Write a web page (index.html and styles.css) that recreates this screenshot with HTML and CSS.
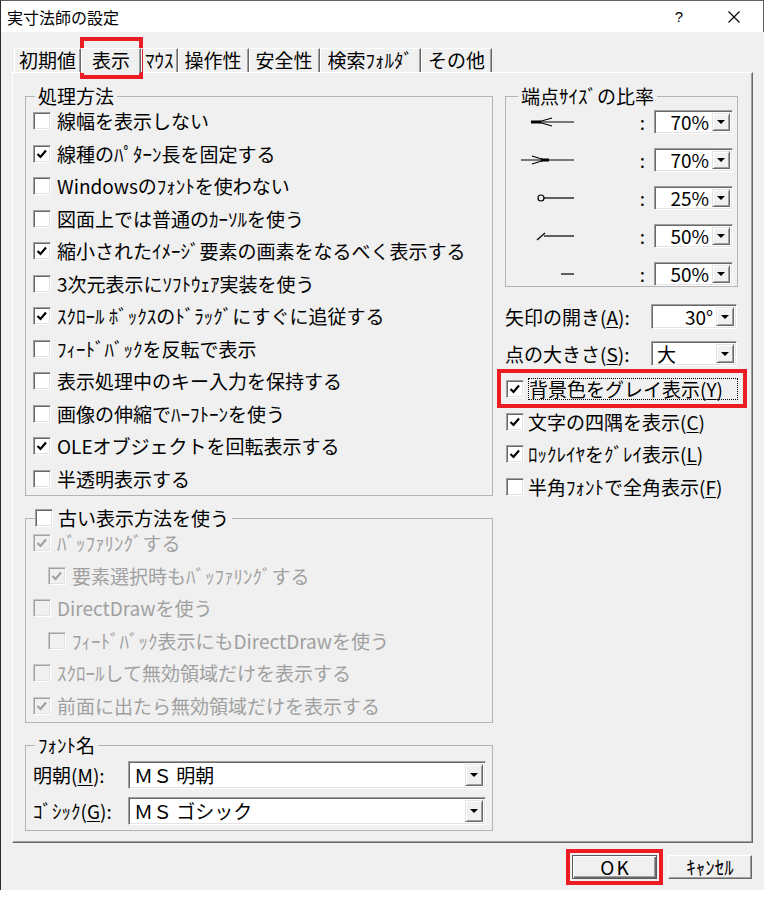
FILE: index.html
```html
<!DOCTYPE html>
<html lang="ja">
<head>
<meta charset="utf-8">
<title>実寸法師の設定</title>
<link rel="stylesheet" href="styles.css">
</head>
<body>
<div class="dialog">
  <div class="titlebar">
    <span class="title">実寸法師の設定</span>
    <span class="help">?</span>
    <svg class="close" viewBox="0 0 12 12"><path d="M0.5 0.5L11.5 11.5M11.5 0.5L0.5 11.5"/></svg>
  </div>
  <div class="body">
    <div class="tabs">
      <div class="tab first">初期値</div>
      <div class="tab active">表示</div>
      <div class="tab narrow">ﾏｳｽ</div>
      <div class="tab">操作性</div>
      <div class="tab">安全性</div>
      <div class="tab wide">検索ﾌｫﾙﾀﾞ</div>
      <div class="tab">その他</div>
    </div>
    <div class="panel">
      <div class="col">
        <fieldset class="group">
          <legend>処理方法</legend>
          <div class="cb"><span class="box"></span>線幅を表示しない</div>
          <div class="cb"><span class="box"><svg class="chk" viewBox="0 0 14 14"><polyline points="2.5,7 5.5,10 11,3.5"/></svg></span>線種のﾊﾟﾀｰﾝ長を固定する</div>
          <div class="cb"><span class="box"></span>Windowsのﾌｫﾝﾄを使わない</div>
          <div class="cb"><span class="box"></span>図面上では普通のｶｰｿﾙを使う</div>
          <div class="cb"><span class="box"><svg class="chk" viewBox="0 0 14 14"><polyline points="2.5,7 5.5,10 11,3.5"/></svg></span>縮小されたｲﾒｰｼﾞ要素の画素をなるべく表示する</div>
          <div class="cb"><span class="box"></span>3次元表示にｿﾌﾄｳｪｱ実装を使う</div>
          <div class="cb"><span class="box"><svg class="chk" viewBox="0 0 14 14"><polyline points="2.5,7 5.5,10 11,3.5"/></svg></span>ｽｸﾛｰﾙ ﾎﾞｯｸｽのﾄﾞﾗｯｸﾞにすぐに追従する</div>
          <div class="cb"><span class="box"></span>ﾌｨｰﾄﾞﾊﾞｯｸを反転で表示</div>
          <div class="cb"><span class="box"></span>表示処理中のキー入力を保持する</div>
          <div class="cb"><span class="box"></span>画像の伸縮でﾊｰﾌﾄｰﾝを使う</div>
          <div class="cb"><span class="box"><svg class="chk" viewBox="0 0 14 14"><polyline points="2.5,7 5.5,10 11,3.5"/></svg></span>OLEオブジェクトを回転表示する</div>
          <div class="cb"><span class="box"></span>半透明表示する</div>
        </fieldset>

        <fieldset class="group g-old">
          <legend class="legend-cb"><span class="box"></span>古い表示方法を使う</legend>
          <div class="cb dis"><span class="box"><svg class="chk" viewBox="0 0 14 14"><polyline points="2.5,7 5.5,10 11,3.5"/></svg></span>ﾊﾞｯﾌｧﾘﾝｸﾞする</div>
          <div class="cb dis ind"><span class="box"><svg class="chk" viewBox="0 0 14 14"><polyline points="2.5,7 5.5,10 11,3.5"/></svg></span>要素選択時もﾊﾞｯﾌｧﾘﾝｸﾞする</div>
          <div class="cb dis"><span class="box"></span>DirectDrawを使う</div>
          <div class="cb dis ind"><span class="box"></span>ﾌｨｰﾄﾞﾊﾞｯｸ表示にもDirectDrawを使う</div>
          <div class="cb dis"><span class="box"></span>ｽｸﾛｰﾙして無効領域だけを表示する</div>
          <div class="cb dis"><span class="box"><svg class="chk" viewBox="0 0 14 14"><polyline points="2.5,7 5.5,10 11,3.5"/></svg></span>前面に出たら無効領域だけを表示する</div>
        </fieldset>

        <fieldset class="group g-font">
          <legend>ﾌｫﾝﾄ名</legend>
          <div class="frows">
            <div class="frow"><span class="lbl">明朝(<u>M</u>):</span><div class="combo"><span class="val">ＭＳ 明朝</span><span class="drop"></span></div></div>
            <div class="frow"><span class="lbl">ｺﾞｼｯｸ(<u>G</u>):</span><div class="combo"><span class="val">ＭＳ ゴシック</span><span class="drop"></span></div></div>
          </div>
        </fieldset>
      </div>

      <div class="col right">
        <fieldset class="group g-ratio">
          <legend>端点ｻｲｽﾞの比率</legend>
          <div class="rrows">
            <div class="rrow">
              <svg class="icon" viewBox="0 0 62 24"><path d="M16 12H59"/><path class="thick" d="M16 12H26"/><path d="M23 12L37 8M23 12L37 16"/></svg>
              <span class="colon">:</span>
              <div class="combo"><span class="val r">70%</span><span class="drop"></span></div>
            </div>
            <div class="rrow">
              <svg class="icon" viewBox="0 0 62 24"><path d="M6 12H59"/><path class="thick" d="M26 12H34"/><path d="M17 8L30 12M17 16L30 12"/></svg>
              <span class="colon">:</span>
              <div class="combo"><span class="val r">70%</span><span class="drop"></span></div>
            </div>
            <div class="rrow">
              <svg class="icon" viewBox="0 0 62 24"><circle cx="26" cy="12" r="3"/><path d="M29 12H59"/></svg>
              <span class="colon">:</span>
              <div class="combo"><span class="val r">25%</span><span class="drop"></span></div>
            </div>
            <div class="rrow">
              <svg class="icon" viewBox="0 0 62 24"><path d="M22 16L30 9"/><path d="M29 12H59"/></svg>
              <span class="colon">:</span>
              <div class="combo"><span class="val r">50%</span><span class="drop"></span></div>
            </div>
            <div class="rrow">
              <svg class="icon" viewBox="0 0 62 24"><path d="M46 12H59"/></svg>
              <span class="colon">:</span>
              <div class="combo"><span class="val r">50%</span><span class="drop"></span></div>
            </div>
          </div>
        </fieldset>

        <div class="field f1"><span class="lbl">矢印の開き(<u>A</u>):</span><div class="combo"><span class="val r">30°</span><span class="drop"></span></div></div>
        <div class="field f2"><span class="lbl">点の大きさ(<u>S</u>):</span><div class="combo"><span class="val">大</span><span class="drop"></span></div></div>

        <div class="rchecks">
          <div class="cb"><span class="box"><svg class="chk" viewBox="0 0 14 14"><polyline points="2.5,7 5.5,10 11,3.5"/></svg></span><span class="focus">背景色をグレイ表示(<u>Y</u>)</span></div>
          <div class="cb"><span class="box"><svg class="chk" viewBox="0 0 14 14"><polyline points="2.5,7 5.5,10 11,3.5"/></svg></span>文字の四隅を表示(<u>C</u>)</div>
          <div class="cb"><span class="box"><svg class="chk" viewBox="0 0 14 14"><polyline points="2.5,7 5.5,10 11,3.5"/></svg></span>ﾛｯｸﾚｲﾔをｸﾞﾚｲ表示(<u>L</u>)</div>
          <div class="cb"><span class="box"></span>半角ﾌｫﾝﾄで全角表示(<u>F</u>)</div>
        </div>
      </div>
    </div>
    <div class="buttons">
      <div class="btn ok">OK</div>
      <div class="btn cancel">ｷｬﾝｾﾙ</div>
    </div>
  </div>
  <div class="mark mark-tab"></div>
  <div class="mark mark-cb"></div>
  <div class="mark mark-ok"></div>
</div>
</body>
</html>
```

FILE: styles.css
```css
* { box-sizing: border-box; }
html, body { margin: 0; padding: 0; background: #fff; }
body {
  font-family: "Noto Sans CJK JP", "Noto Sans", sans-serif;
  font-size: 19px;
  line-height: 20px;
  color: #000;
}
u { text-decoration: underline; text-underline-offset: 2px; text-decoration-thickness: 1px; }

.dialog {
  position: relative;
  width: 764px;
  height: 890px;
  border-left: 1px solid #2b2b2b;
  border-top: 1px solid #5f5f5f;
  background: #f0f0f0;
  display: flex;
  flex-direction: column;
}

.titlebar {
  flex: none;
  height: 31px;
  background: #fff;
  border-right: 1px solid #5f5f5f;
  display: flex;
  align-items: center;
  padding-left: 6px;
}
.title { flex: 1; font-size: 16px; }
.help { font-family: "Liberation Sans", sans-serif; font-size: 15px; margin-right: 45px; }
.close { width: 12px; height: 12px; margin-right: 23px; fill: none; stroke: #000; stroke-width: 1.1; }

.body {
  flex: 1;
  display: flex;
  flex-direction: column;
  padding: 16px 11px 10px 11px;
}

.tabs {
  display: flex;
  align-items: flex-end;
  height: 24px;
  padding-left: 2px;
  position: relative;
  z-index: 1;
}
.tab {
  height: 24px;
  padding: 0 6px;
  border: 1px solid #fff;
  border-right-color: #696969;
  border-bottom: 0;
  box-shadow: inset -1px 0 #a0a0a0;
  line-height: 22px;
  white-space: nowrap;
}
.tab.first { padding: 0 4px; }
.tab.active { height: 25px; margin-bottom: -1px; padding: 0 10px; background: #f0f0f0; }
.tab.narrow { padding: 0 3px; }
.tab.wide { padding: 0 7px; }

.panel {
  flex: none;
  height: 771px;
  border: 1px solid;
  border-color: #fff #696969 #696969 #fff;
  box-shadow: inset -1px -1px #a0a0a0;
  display: grid;
  grid-template-columns: 468px 233px;
  column-gap: 12px;
  align-items: start;
  padding: 14px 14px 0 12px;
}

.col { display: flex; flex-direction: column; }

.group {
  margin: 0;
  padding: 0;
  min-width: 0;
  border: 1px solid #b4b4b4;
}
.group legend {
  margin-left: 9px;
  padding: 0 3px;
  line-height: 18px;
  height: 18px;
  white-space: nowrap;
}
.group legend.legend-cb { display: flex; align-items: center; padding: 0 3px 0 0; }
.legend-cb .box { margin-right: 5px; }

.g-old, .g-font { margin-top: 13px; }

.cb {
  display: flex;
  align-items: center;
  height: 32.5px;
  padding-left: 7px;
  white-space: nowrap;
}
.cb.ind { padding-left: 22px; }

.box {
  flex: none;
  width: 18px;
  height: 18px;
  margin-right: 6px;
  background: #fff;
  border: 1px solid;
  border-color: #a0a0a0 #fff #fff #a0a0a0;
  box-shadow: inset 1px 1px #696969, inset -1px -1px #e3e3e3;
  display: flex;
  align-items: center;
  justify-content: center;
}
.chk { width: 14px; height: 14px; fill: none; stroke: #000; stroke-width: 2.2; }

.dis { color: #a0a0a0; }
.dis .box { background: #f0f0f0; border-color: #c8c8c8 #fff #fff #c8c8c8; box-shadow: inset 1px 1px #a0a0a0, inset -1px -1px #e3e3e3; }
.dis .chk { stroke: #a0a0a0; }

.frows {
  display: flex;
  flex-direction: column;
  gap: 8px;
  padding: 7px 6px 5px 7px;
}
.frow { display: flex; align-items: center; height: 28px; white-space: nowrap; }
.frow .lbl { width: 95px; flex: none; }
.frow .combo { flex: 1; }

.combo {
  display: flex;
  height: 100%;
  background: #fff;
  border: 1px solid;
  border-color: #a0a0a0 #fff #fff #a0a0a0;
  box-shadow: inset 1px 1px #696969, inset -1px -1px #e3e3e3;
  padding: 2px;
}
.combo .val {
  flex: 1;
  display: flex;
  align-items: center;
  padding: 0 3px;
  white-space: nowrap;
}
.combo .val.r { justify-content: flex-end; }
.drop {
  flex: none;
  width: 18px;
  background: #f0f0f0;
  border: 1px solid;
  border-color: #e3e3e3 #696969 #696969 #e3e3e3;
  box-shadow: inset 1px 1px #fff, inset -1px -1px #a0a0a0;
  display: flex;
  align-items: center;
  justify-content: center;
}
.drop::after {
  content: "";
  width: 0;
  height: 0;
  border-top: 4px solid #000;
  border-left: 4px solid transparent;
  border-right: 4px solid transparent;
}

.g-ratio legend { margin-left: 12px; }
.rrows {
  display: flex;
  flex-direction: column;
  gap: 14px;
  padding: 5px 4px 0 9px;
}
.rrow { display: flex; align-items: center; height: 24px; }
.icon { flex: none; width: 62px; height: 24px; fill: none; stroke: #000; stroke-width: 1.2; }
.icon .thick { stroke-width: 3; }
.colon { margin-left: auto; margin-right: 9px; }
.rrow .combo { flex: none; width: 79px; }

.field {
  display: flex;
  align-items: center;
  height: 25px;
  padding-right: 1px;
  white-space: nowrap;
}
.field .lbl { flex: 1; }
.field .combo { flex: none; width: 86px; }
.f1 { margin-top: 17px; }
.f2 { margin-top: 12px; }

.rchecks { margin-top: 7px; }
.rchecks .cb { padding-left: 1px; }
.rchecks .box { margin-right: 4px; }
.focus {
  display: inline-block;
  width: 211px;
  height: 22px;
  line-height: 20px;
  border: 1px dotted #000;
  white-space: nowrap;
}

.buttons {
  display: flex;
  justify-content: flex-end;
  gap: 11px;
  margin-top: 12px;
  padding-right: 1px;
}
.btn {
  height: 24px;
  display: flex;
  align-items: center;
  justify-content: center;
  background: #f0f0f0;
  border: 1px solid;
  border-color: #fff #696969 #696969 #fff;
  box-shadow: inset -1px -1px #a0a0a0;
  white-space: nowrap;
}
.btn.ok {
  width: 85px;
  border-color: #5a5a5a;
  box-shadow: inset 1px 1px #fff, inset -1px -1px #696969, inset -2px -2px #a0a0a0;
  letter-spacing: 2px;
  padding-left: 2px;
}
.btn.cancel { width: 84px; }

.mark {
  position: absolute;
  border: 4px solid #ec1c24;
  pointer-events: none;
}
.mark-tab { left: 79px; top: 36px; width: 63px; height: 42px; }
.mark-cb { left: 496px; top: 368px; width: 250px; height: 39px; }
.mark-ok { left: 565px; top: 848px; width: 97px; height: 36px; }
```
